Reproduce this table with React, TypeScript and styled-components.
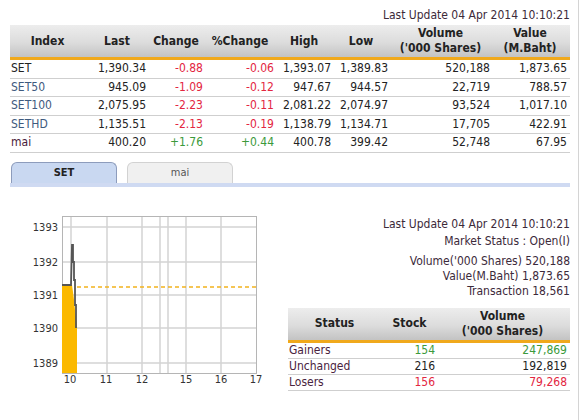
import React from "react";
import styled, { createGlobalStyle } from "styled-components";

const Global = createGlobalStyle`
  html, body { margin: 0; padding: 0; background: #fff; }
  body { font-family: "DejaVu Sans Condensed", "DejaVu Sans", sans-serif; font-size: 12px; color: #222; }
`;

const Page = styled.div`
  width: 578px;
  height: 420px;
  border-right: 1px solid #d4d4d4;
  overflow: hidden;
`;

const Top = styled.div`
  padding: 0 8px 0 10px;
`;

const UpdateLine = styled.div`
  text-align: right;
  color: #3c2a3a;
  height: 16px;
  line-height: 16px;
  padding-top: 7px;
  margin-bottom: 2px;
`;

const Table = styled.table`
  border-collapse: collapse;
  width: 560px;
  table-layout: fixed;
`;

const Th = styled.th`
  background: linear-gradient(to bottom, #ededed 0%, #dcdcdc 55%, #c3c3c3 100%);
  border-bottom: 3px solid #f0a91c;
  font-weight: bold;
  color: #222;
  text-align: center;
  height: 32px;
  line-height: 15px;
  padding: 0 3px 0 0;
`;

const Td = styled.td<{ $tone?: string; $align?: string }>`
  height: 17.5px;
  line-height: 17px;
  padding: 0 3px 0 1px;
  border-bottom: 1px solid #cfcfcf;
  text-align: ${(p) => p.$align || "right"};
  color: ${(p) => p.$tone || "#222"};
  white-space: nowrap;
`;

const Tabs = styled.div`
  display: flex;
  gap: 10px;
  margin-top: 9px;
  padding-left: 1px;
  border-bottom: 4px solid #cfdaf2;
  width: 559px;
`;

const Tab = styled.div<{ $active?: boolean }>`
  width: 104px;
  height: 20px;
  line-height: 20px;
  text-align: center;
  font-size: 11px;
  border: 1px solid ${(p) => (p.$active ? "#8d9cbc" : "#d2d2d2")};
  border-bottom: none;
  border-radius: 6px 6px 0 0;
  background: ${(p) => (p.$active ? "#c9d8f1" : "#f0f0f0")};
  font-weight: ${(p) => (p.$active ? "bold" : "normal")};
  color: ${(p) => (p.$active ? "#222" : "#555")};
`;

const Bottom = styled.div`
  display: flex;
  margin-top: 13px;
`;

const Chart = styled.svg`
  display: block;
  flex: none;
`;

const Side = styled.div`
  flex: 1;
  padding: 17px 8px 0 8px;
  color: #3c2a3a;
`;

const InfoLine = styled.div<{ $gap?: number }>`
  text-align: right;
  line-height: 15px;
  margin-top: ${(p) => p.$gap || 0}px;
`;

const StatusTable = styled(Table)`
  width: 282px;
  margin-top: 9px;
`;

const Td2 = styled(Td)`
  height: 15px;
  line-height: 15px;
`;

const RED = "#e3263f";
const GREEN = "#3b9a3b";

const rows = [
  { n: "SET", c: "#222", v: ["1,390.34", "-0.88", "-0.06", "1,393.07", "1,389.83", "520,188", "1,873.65"] },
  { n: "SET50", c: "#3f5a7e", v: ["945.09", "-1.09", "-0.12", "947.67", "944.57", "22,719", "788.57"] },
  { n: "SET100", c: "#3f5a7e", v: ["2,075.95", "-2.23", "-0.11", "2,081.22", "2,074.97", "93,524", "1,017.10"] },
  { n: "SETHD", c: "#3f5a7e", v: ["1,135.51", "-2.13", "-0.19", "1,138.79", "1,134.71", "17,705", "422.91"] },
  { n: "mai", c: "#4a1c3a", v: ["400.20", "+1.76", "+0.44", "400.78", "399.42", "52,748", "67.95"] },
];

const widths = [78, 61, 57, 71, 57, 57, 102, 77];

const yLabels = [
  { t: "1393", y: 27 },
  { t: "1392", y: 62 },
  { t: "1391", y: 95 },
  { t: "1390", y: 128 },
  { t: "1389", y: 163 },
];
const xLabels = [
  { t: "10", x: 70 },
  { t: "11", x: 106 },
  { t: "12", x: 142 },
  { t: "15", x: 186 },
  { t: "16", x: 221 },
  { t: "17", x: 256 },
];
const vGrid = [71, 107, 142, 160, 168, 186, 221];

export default function App() {
  return (
    <Page>
      <Global />
      <Top>
        <UpdateLine>Last Update 04 Apr 2014 10:10:21</UpdateLine>
        <Table>
          <colgroup>
            {widths.map((w, i) => (
              <col key={i} style={{ width: w }} />
            ))}
          </colgroup>
          <thead>
            <tr>
              <Th>Index</Th>
              <Th>Last</Th>
              <Th>Change</Th>
              <Th>%Change</Th>
              <Th>High</Th>
              <Th>Low</Th>
              <Th>
                Volume
                <br />
                ('000 Shares)
              </Th>
              <Th>
                Value
                <br />
                (M.Baht)
              </Th>
            </tr>
          </thead>
          <tbody>
            {rows.map((r) => {
              const tone = r.v[1].startsWith("-") ? RED : GREEN;
              return (
                <tr key={r.n}>
                  <Td $align="left" $tone={r.c}>
                    {r.n}
                  </Td>
                  <Td>{r.v[0]}</Td>
                  <Td $tone={tone}>{r.v[1]}</Td>
                  <Td $tone={tone}>{r.v[2]}</Td>
                  <Td>{r.v[3]}</Td>
                  <Td>{r.v[4]}</Td>
                  <Td>{r.v[5]}</Td>
                  <Td>{r.v[6]}</Td>
                </tr>
              );
            })}
          </tbody>
        </Table>
        <Tabs>
          <Tab $active>SET</Tab>
          <Tab>mai</Tab>
        </Tabs>
      </Top>
      <Bottom>
        <Chart width={280} height={200} viewBox="0 0 280 200">
          {[27, 62, 95, 128, 163].map((y) => (
            <line key={y} x1={62} x2={256} y1={y} y2={y} stroke="#d3d3d3" strokeWidth={1.5} />
          ))}
          {vGrid.map((x) => (
            <line key={x} x1={x} x2={x} y1={16} y2={173} stroke="#d3d3d3" strokeWidth={1.5} />
          ))}
          <rect x={62.5} y={16.5} width={194} height={157} fill="none" stroke="#b5b5b5" strokeWidth={1} />
          <polygon points="62,173 62,85 72,85 73,92 74,100 75,110 76,118 77,128 77,173" fill="#fbb900" />
          <line x1={77} x2={256} y1={87} y2={87} stroke="#f2b31c" strokeWidth={1.3} strokeDasharray="4 3" />
          <polyline
            points="62,85 71,85 72,45 73,45 73,62 74,62 74,80 75,80 75,105 76,105 76,128"
            fill="none"
            stroke="#555"
            strokeWidth={1.8}
          />
          {yLabels.map((l) => (
            <text key={l.t} x={58} y={l.y + 4} textAnchor="end" fontSize={11} fill="#333" fontFamily="DejaVu Sans Condensed, sans-serif">
              {l.t}
            </text>
          ))}
          {xLabels.map((l) => (
            <text key={l.t} x={l.x} y={183} textAnchor="middle" fontSize={11} fill="#333" fontFamily="DejaVu Sans Condensed, sans-serif">
              {l.t}
            </text>
          ))}
        </Chart>
        <Side>
          <InfoLine>Last Update 04 Apr 2014 10:10:21</InfoLine>
          <InfoLine $gap={2}>Market Status : Open(I)</InfoLine>
          <InfoLine $gap={5}>Volume('000 Shares) 520,188</InfoLine>
          <InfoLine>Value(M.Baht) 1,873.65</InfoLine>
          <InfoLine>Transaction 18,561</InfoLine>
          <StatusTable>
            <colgroup>
              <col style={{ width: 96 }} />
              <col style={{ width: 54 }} />
              <col style={{ width: 132 }} />
            </colgroup>
            <thead>
              <tr>
                <Th>Status</Th>
                <Th>Stock</Th>
                <Th>
                  Volume
                  <br />
                  ('000 Shares)
                </Th>
              </tr>
            </thead>
            <tbody>
              <tr>
                <Td2 $align="left" $tone="#4a2440">Gainers</Td2>
                <Td2 $tone={GREEN}>154</Td2>
                <Td2 $tone={GREEN}>247,869</Td2>
              </tr>
              <tr>
                <Td2 $align="left" $tone="#4a2440">Unchanged</Td2>
                <Td2>216</Td2>
                <Td2>192,819</Td2>
              </tr>
              <tr>
                <Td2 $align="left" $tone="#4a2440">Losers</Td2>
                <Td2 $tone={RED}>156</Td2>
                <Td2 $tone={RED}>79,268</Td2>
              </tr>
            </tbody>
          </StatusTable>
        </Side>
      </Bottom>
    </Page>
  );
}
